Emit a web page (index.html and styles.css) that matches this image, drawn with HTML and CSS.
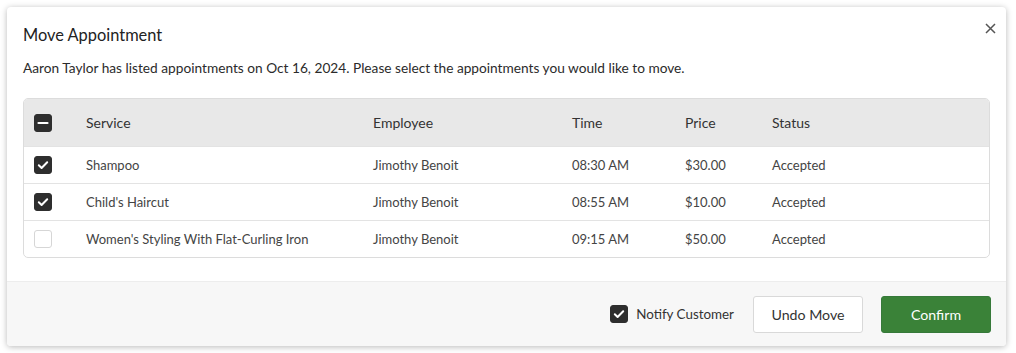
FILE: index.html
```html
<!DOCTYPE html>
<html>
<head>
<meta charset="utf-8">
<link rel="stylesheet" href="styles.css">
</head>
<body>
<div class="modal">
  <div class="modal-body">
    <div class="modal-head">
      <h1 class="title">Move Appointment</h1>
      <button class="close" aria-label="Close">
        <svg width="11" height="11" viewBox="0 0 11 11"><path d="M1 1L10 10M10 1L1 10" stroke="#555" stroke-width="1.5" fill="none"/></svg>
      </button>
    </div>
    <p class="desc">Aaron Taylor has listed appointments on Oct 16, 2024. Please select the appointments you would like to move.</p>
    <div class="table">
      <div class="row head">
        <span class="cb cb-on"><svg width="18" height="18" viewBox="0 0 18 18"><path d="M4.5 9H13.5" stroke="#fff" stroke-width="2.2" stroke-linecap="round"/></svg></span>
        <span>Service</span><span>Employee</span><span>Time</span><span>Price</span><span>Status</span>
      </div>
      <div class="row">
        <span class="cb cb-on"><svg width="18" height="18" viewBox="0 0 18 18"><path d="M4.8 9.3L7.6 12L13.2 6.2" stroke="#fff" stroke-width="2" fill="none" stroke-linecap="round" stroke-linejoin="round"/></svg></span>
        <span>Shampoo</span><span>Jimothy Benoit</span><span>08:30 AM</span><span>$30.00</span><span>Accepted</span>
      </div>
      <div class="row">
        <span class="cb cb-on"><svg width="18" height="18" viewBox="0 0 18 18"><path d="M4.8 9.3L7.6 12L13.2 6.2" stroke="#fff" stroke-width="2" fill="none" stroke-linecap="round" stroke-linejoin="round"/></svg></span>
        <span>Child's Haircut</span><span>Jimothy Benoit</span><span>08:55 AM</span><span>$10.00</span><span>Accepted</span>
      </div>
      <div class="row">
        <span class="cb"></span>
        <span>Women's Styling With Flat-Curling Iron</span><span>Jimothy Benoit</span><span>09:15 AM</span><span>$50.00</span><span>Accepted</span>
      </div>
    </div>
  </div>
  <div class="modal-foot">
    <label class="notify">
      <span class="cb cb-on"><svg width="18" height="18" viewBox="0 0 18 18"><path d="M4.8 9.3L7.6 12L13.2 6.2" stroke="#fff" stroke-width="2" fill="none" stroke-linecap="round" stroke-linejoin="round"/></svg></span>
      <span>Notify Customer</span>
    </label>
    <button class="btn btn-default">Undo Move</button>
    <button class="btn btn-primary">Confirm</button>
  </div>
</div>
</body>
</html>
```

FILE: styles.css
```css
* { box-sizing: border-box; }
html, body { margin: 0; padding: 0; background: #fff; }
body {
  font-family: "Lato", "Liberation Sans", sans-serif;
  color: #333;
  padding: 7px 10px 7px 7px;
}
.modal {
  width: 999px;
  height: 339px;
  background: #fff;
  border-radius: 4px;
  box-shadow: 0 1px 6px rgba(0,0,0,0.28);
  display: flex;
  flex-direction: column;
  overflow: hidden;
}
.modal-body {
  padding: 0 16px;
  flex: 1;
}
.modal-head {
  display: flex;
  justify-content: space-between;
  align-items: center;
  height: 52px;
  padding-top: 2px;
}
.title {
  margin: 0;
  font-size: 16.4px;
  font-weight: 400;
  color: #222;
}
.close {
  border: 0;
  background: none;
  padding: 0;
  margin-right: -6px;
  margin-top: -12px;
  display: flex;
}
.desc {
  margin: 0 0 22px;
  font-size: 13.7px;
  line-height: 17px;
  color: #2b2b2b;
}
.table {
  border: 1px solid #dcdcdc;
  border-radius: 5px;
  overflow: hidden;
}
.row {
  display: grid;
  grid-template-columns: 52px 287px 199px 113px 87px 1fr;
  align-items: center;
  padding-left: 10px;
  height: 37px;
  border-top: 1px solid #e3e3e3;
  font-size: 13px;
  color: #444;
}
.row.head {
  height: 47px;
  border-top: 0;
  background: #e8e8e8;
  font-size: 14px;
  color: #333;
}
.cb {
  width: 18px;
  height: 18px;
  border-radius: 3px;
  border: 1px solid #d6d6d6;
  background: #fff;
  display: flex;
}
.cb-on {
  background: #2e2e2e;
  border-color: #2e2e2e;
}
.cb svg { margin: -1px; }
.modal-foot {
  height: 65px;
  background: #f7f7f7;
  border-top: 1px solid #ededed;
  display: flex;
  align-items: center;
  justify-content: flex-end;
  padding: 0 15px 0 0;
}
.notify {
  display: flex;
  align-items: center;
  gap: 8px;
  font-size: 13.4px;
  color: #333;
  margin-right: 19px;
}
.btn {
  height: 37px;
  width: 110px;
  border-radius: 3px;
  font-family: inherit;
  font-size: 14.2px;
}
.btn-default {
  background: #fff;
  border: 1px solid #d9d9d9;
  color: #333;
  margin-right: 18px;
}
.btn-primary {
  background: #3a8238;
  border: 1px solid #36793a;
  color: #fff;
}
```
